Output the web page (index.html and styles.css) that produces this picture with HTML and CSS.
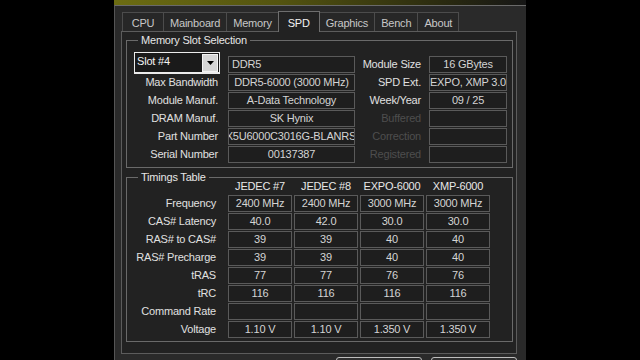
FILE: index.html
```html
<!DOCTYPE html>
<html lang="en">
  <head>
    <meta charset="UTF-8" />
    <meta name="viewport" content="width=device-width, initial-scale=1.0" />
    <title>CPU-Z SPD</title>
    <link rel="stylesheet" href="styles.css">
  </head>
  <body>
    <div class="window">
      <div class="titlebar"></div>
      <div class="client">
        <div class="tabs">
          <div class="tab">CPU</div>
          <div class="tab">Mainboard</div>
          <div class="tab">Memory</div>
          <div class="tab active">SPD</div>
          <div class="tab">Graphics</div>
          <div class="tab">Bench</div>
          <div class="tab">About</div>
        </div>
        <div class="page">
          <fieldset class="group">
            <legend>Memory Slot Selection</legend>
            <div class="slot-grid">
              <div class="select">
                <span class="select-text">Slot #4</span>
                <span class="select-btn">
                  <svg width="7" height="4" viewBox="0 0 7 4"><polygon points="0,0 7,0 3.5,4" fill="#000"/></svg>
                </span>
              </div>
              <div class="field left">DDR5</div>
              <div class="label r">Module Size</div>
              <div class="field">16 GBytes</div>

              <div class="label">Max Bandwidth</div>
              <div class="field">DDR5-6000 (3000 MHz)</div>
              <div class="label r">SPD Ext.</div>
              <div class="field">EXPO, XMP 3.0</div>

              <div class="label">Module Manuf.</div>
              <div class="field">A-Data Technology</div>
              <div class="label r">Week/Year</div>
              <div class="field">09 / 25</div>

              <div class="label">DRAM Manuf.</div>
              <div class="field">SK Hynix</div>
              <div class="label r off">Buffered</div>
              <div class="field"></div>

              <div class="label">Part Number</div>
              <div class="field">AX5U6000C3016G-BLANRSG</div>
              <div class="label r off">Correction</div>
              <div class="field"></div>

              <div class="label">Serial Number</div>
              <div class="field">00137387</div>
              <div class="label r off">Registered</div>
              <div class="field"></div>
            </div>
          </fieldset>

          <fieldset class="group timings">
            <legend>Timings Table</legend>
            <div class="timing-grid">
              <div></div>
              <div class="head">JEDEC #7</div>
              <div class="head">JEDEC #8</div>
              <div class="head">EXPO-6000</div>
              <div class="head">XMP-6000</div>

              <div class="label">Frequency</div>
              <div class="field">2400 MHz</div>
              <div class="field">2400 MHz</div>
              <div class="field">3000 MHz</div>
              <div class="field">3000 MHz</div>

              <div class="label">CAS# Latency</div>
              <div class="field">40.0</div>
              <div class="field">42.0</div>
              <div class="field">30.0</div>
              <div class="field">30.0</div>

              <div class="label">RAS# to CAS#</div>
              <div class="field">39</div>
              <div class="field">39</div>
              <div class="field">40</div>
              <div class="field">40</div>

              <div class="label">RAS# Precharge</div>
              <div class="field">39</div>
              <div class="field">39</div>
              <div class="field">40</div>
              <div class="field">40</div>

              <div class="label">tRAS</div>
              <div class="field">77</div>
              <div class="field">77</div>
              <div class="field">76</div>
              <div class="field">76</div>

              <div class="label">tRC</div>
              <div class="field">116</div>
              <div class="field">116</div>
              <div class="field">116</div>
              <div class="field">116</div>

              <div class="label">Command Rate</div>
              <div class="field"></div>
              <div class="field"></div>
              <div class="field"></div>
              <div class="field"></div>

              <div class="label">Voltage</div>
              <div class="field">1.10 V</div>
              <div class="field">1.10 V</div>
              <div class="field">1.350 V</div>
              <div class="field">1.350 V</div>
            </div>
          </fieldset>
        </div>
        <div class="buttons">
          <div class="btn"></div>
          <div class="btn"></div>
        </div>
      </div>
    </div>
  </body>
</html>
```

FILE: styles.css
```css
body {
  margin: 0;
  background-color: #000;
  font-family: "Liberation Sans", Arial, sans-serif;
  font-size: 11px;
  letter-spacing: -0.2px;
  color: #dcdcdc;
}
.window {
  margin-left: 114px;
  width: 412px;
  height: 360px;
  overflow: hidden;
  background-color: #2a2a2a;
}
.titlebar {
  height: 5px;
  background: linear-gradient(90deg, #6c6c12 0%, #545410 40%, #2a2a10 80%, #161616 100%);
}
.client {
  height: 355px;
  box-sizing: border-box;
  border-top: 1px solid #6a6a6a;
  border-left: 1px solid #555;
  padding: 5px 9px 0 6px;
}
.tabs {
  display: flex;
  align-items: flex-end;
  height: 20px;
  padding-left: 1px;
}
.tab {
  height: 19px;
  box-sizing: border-box;
  min-width: 42px;
  padding: 2px 6px 0;
  border: 1px solid #4c4c4c;
  border-bottom: 0;
  margin-right: -1px;
  background-color: #272727;
  color: #c8c8c8;
  text-align: center;
  line-height: 17px;
}
.tab.active {
  height: 21px;
  padding-top: 3px;
  margin-bottom: -1px;
  background-color: #222;
  border-color: #6e6e6e;
  color: #f2f2f2;
  position: relative;
  z-index: 1;
}
.page {
  border: 1px solid #5c5c5c;
  background-color: #222;
  padding: 2px 3px 11px 4px;
}
.group {
  margin: 0;
  min-width: 0;
  border: 1px solid #6a6a6a;
  padding: 9px 5px 4px 7px;
}
.group legend {
  padding: 0 3px;
  margin-left: 4px;
  line-height: 13px;
  color: #e6e6e6;
}
.timings {
  margin-top: 3px;
  padding-top: 0;
  padding-bottom: 3px;
}
.slot-grid {
  display: grid;
  grid-template-columns: 94px 127px 74px 78px;
  grid-auto-rows: 17px;
  row-gap: 1px;
}
.timing-grid {
  display: grid;
  grid-template-columns: 92px repeat(4, 64px);
  grid-template-rows: 14px;
  grid-auto-rows: 17px;
  column-gap: 2px;
  row-gap: 1px;
  margin-top: -4px;
}
.label {
  text-align: right;
  padding-right: 10px;
  line-height: 17px;
  white-space: nowrap;
  color: #e0e0e0;
}
.label.r {
  padding-right: 8px;
}
.label.off {
  color: #4e4e4e;
}
.head {
  text-align: center;
  line-height: 13px;
  color: #e8e8e8;
  white-space: nowrap;
}
.field {
  height: 17px;
  box-sizing: border-box;
  border: 1px solid #5a5a5a;
  background-color: #1e1e1e;
  display: flex;
  justify-content: center;
  align-items: center;
  overflow: hidden;
  white-space: nowrap;
  line-height: 15px;
  color: #d4d4d4;
}
.field.left {
  justify-content: flex-start;
  padding-left: 3px;
}
.select {
  width: 86px;
  height: 22px;
  margin-top: -4px;
  box-sizing: border-box;
  border: 1px solid #ececec;
  border-bottom-width: 2px;
  background-color: #1a1a1a;
  display: flex;
  align-items: flex-start;
  color: #f4f4f4;
}
.select-text {
  padding-left: 2px;
  line-height: 17px;
}
.select-btn {
  margin: 1px 1px 0 auto;
  width: 16px;
  height: 18px;
  box-sizing: border-box;
  background-color: #d6d6d6;
  border: 1px solid #f4f4f4;
  display: flex;
  justify-content: center;
  align-items: center;
}
.buttons {
  display: flex;
  justify-content: flex-end;
  gap: 9px;
  margin-top: 3px;
}
.btn {
  width: 86px;
  height: 20px;
  box-sizing: border-box;
  border: 1px solid #bdbdbd;
  border-radius: 3px;
  background-color: #2f2f2f;
}
```
